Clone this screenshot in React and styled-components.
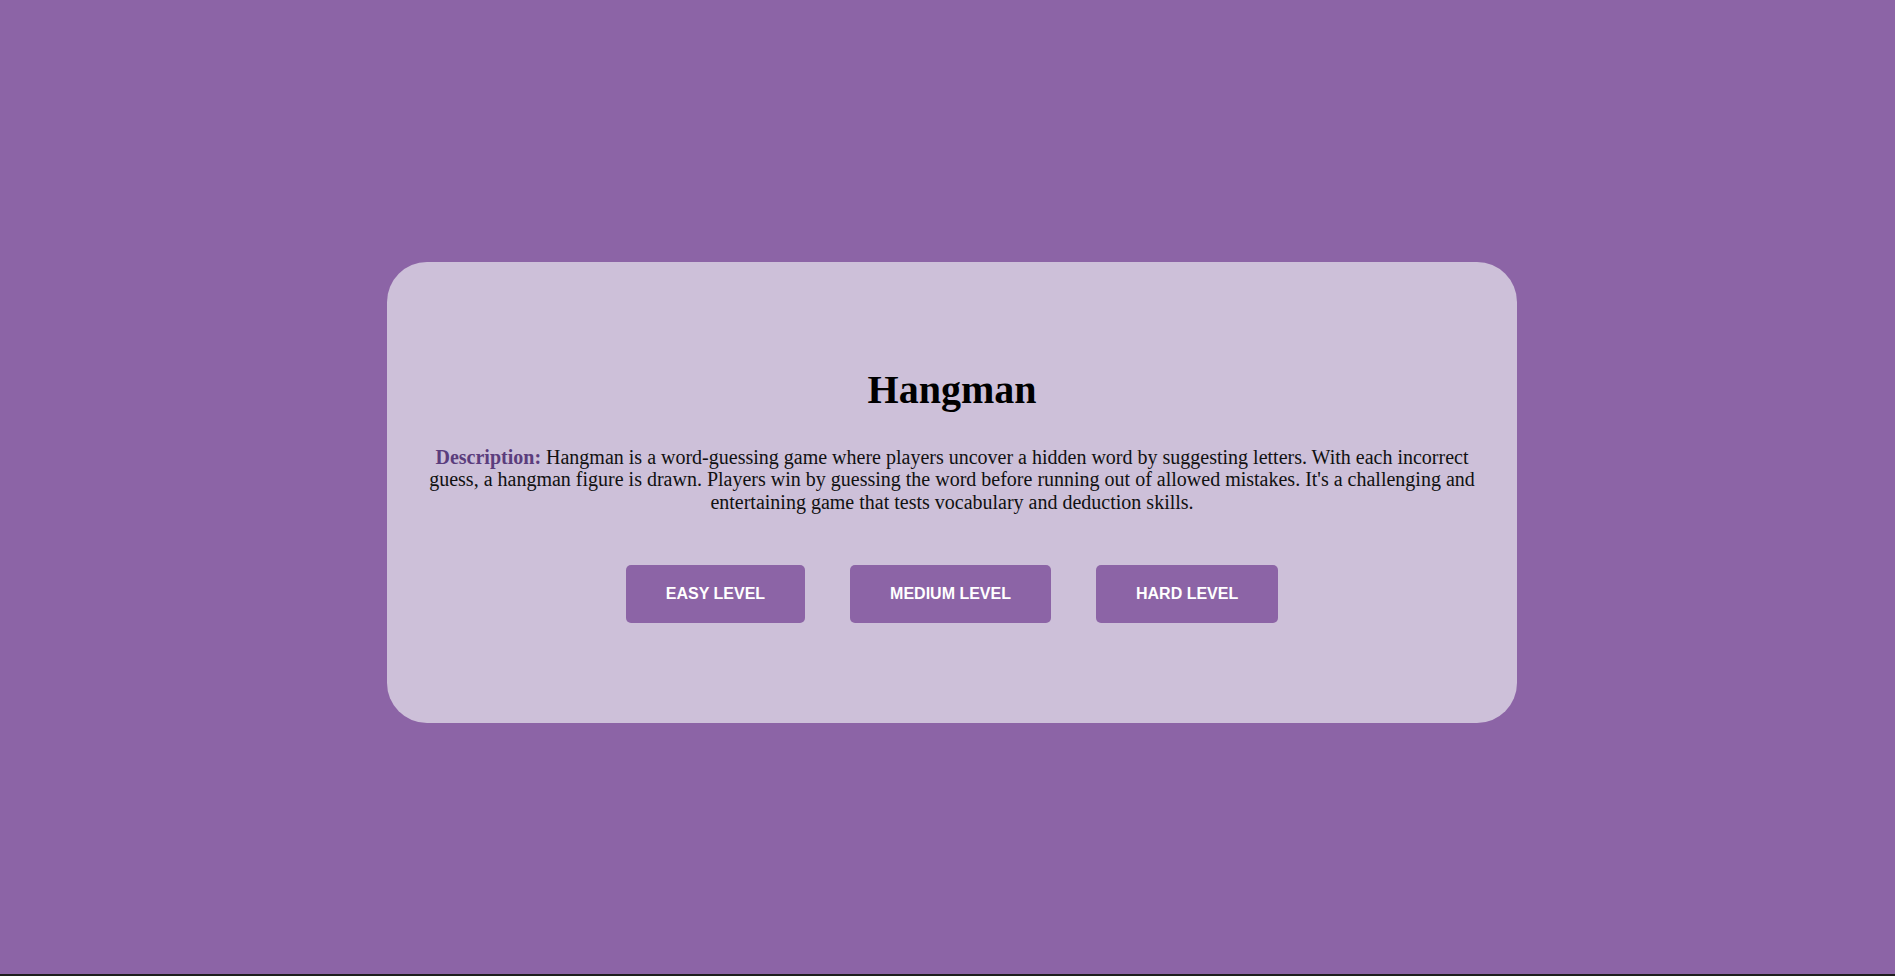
import React from "react";
import styled, { createGlobalStyle } from "styled-components";

const Global = createGlobalStyle`
  html { background: #1e1e1e; }
  body { margin: 0; font-family: "Liberation Serif", "Times New Roman", serif; }
`;

const Page = styled.div`
  box-sizing: border-box;
  height: 974px;
  padding-left: 9px;
  background: #8c64a6;
  display: flex;
  align-items: center;
  justify-content: center;
`;

const Card = styled.div`
  box-sizing: border-box;
  width: 1130px;
  height: 461px;
  margin-top: 10px;
  background: #cdc0d9;
  border-radius: 40px;
  padding: 104px 40px 0;
  text-align: center;
`;

const Title = styled.h1`
  margin: 0 0 33px;
  font-size: 40px;
  font-weight: bold;
  color: #000;
`;

const Description = styled.p`
  margin: 0 0 52px;
  font-size: 20px;
  line-height: 22.6px;
  color: #111;
`;

const Label = styled.strong`
  color: #5b3d7d;
`;

const Buttons = styled.div`
  display: flex;
  justify-content: center;
  gap: 45px;
`;

const LevelButton = styled.button`
  font-family: "Liberation Sans", Arial, sans-serif;
  font-size: 16px;
  font-weight: bold;
  color: #fff;
  background: #8c64a6;
  border: none;
  border-radius: 5px;
  padding: 20px 40px;
  line-height: 18px;
  text-transform: uppercase;
  cursor: pointer;
`;

export default function App() {
  return (
    <>
      <Global />
      <Page>
        <Card>
          <Title>Hangman</Title>
          <Description>
            <Label>Description:</Label> Hangman is a word-guessing game where players uncover a hidden word by suggesting letters. With each incorrect guess, a hangman figure is drawn. Players win by guessing the word before running out of allowed mistakes. It's a challenging and entertaining game that tests vocabulary and deduction skills.
          </Description>
          <Buttons>
            <LevelButton>Easy Level</LevelButton>
            <LevelButton>Medium Level</LevelButton>
            <LevelButton>Hard Level</LevelButton>
          </Buttons>
        </Card>
      </Page>
    </>
  );
}
